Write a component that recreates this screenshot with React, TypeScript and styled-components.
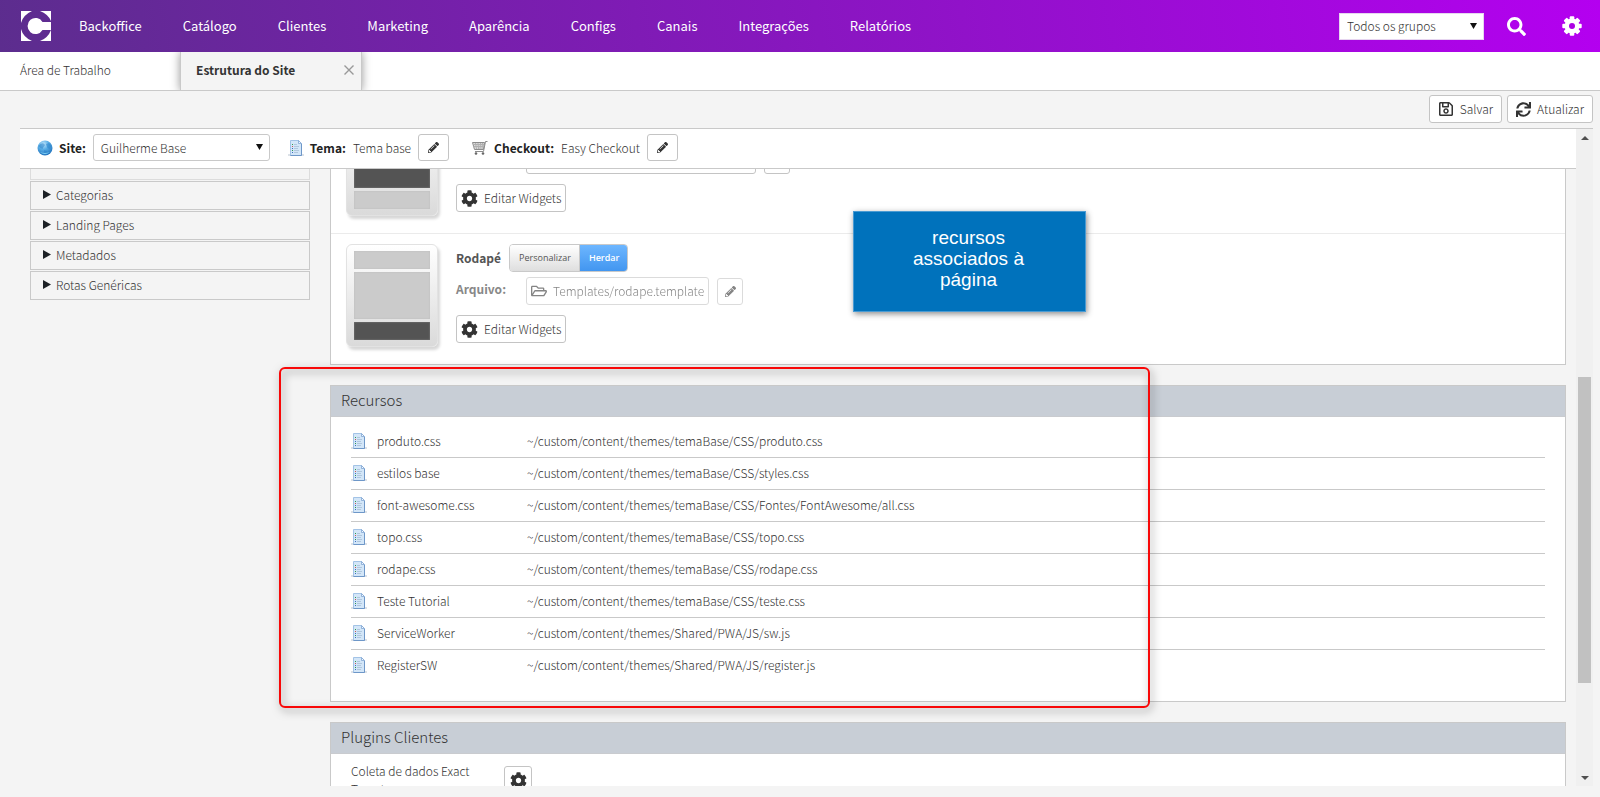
import React from 'react';
import styled, { createGlobalStyle, css } from 'styled-components';
import { FaCog, FaPencilAlt, FaRegFolderOpen, FaRegSave, FaSearch, FaSync } from 'react-icons/fa';

const line = '#c9c9c9';
const page = '#f4f4f4';

const GlobalStyle = createGlobalStyle`
  *, *::before, *::after { box-sizing: border-box; }
  body {
    margin: 0;
    background: ${page};
    color: #333;
    font: 300 12px/18px 'Noto Sans CJK JP', 'Noto Sans CJK SC', 'Noto Sans', sans-serif;
  }
  button, select, input { font: inherit; color: inherit; }
  h2, h3, p { margin: 0; }
`;

const Shell = styled.div`
  display: flex;
  flex-direction: column;
  height: 100vh;
  overflow: hidden;
  padding-bottom: 11px;
`;

/* ---------- top bar ---------- */

const TopBar = styled.header`
  display: flex;
  align-items: center;
  flex: none;
  height: 52px;
  padding: 0 18px 0 21px;
  background: linear-gradient(80deg, #5c2d8e, #b400f0);
`;

const Nav = styled.nav`
  display: flex;
  flex: 1;
  gap: 41px;
  margin-left: 28px;
`;

const NavLink = styled.a`
  color: #fff;
  font-size: 13px;
  font-weight: 400;
  text-decoration: none;
`;

const SelectBox = styled.span<{ $width: number; $height: number; $outlined?: boolean }>`
  position: relative;
  display: flex;
  width: ${(p) => p.$width}px;
  height: ${(p) => p.$height}px;
  border: 1px solid ${(p) => (p.$outlined ? line : '#e6d5f0')};
  border-radius: ${(p) => (p.$outlined ? 3 : 0)}px;
  background: #fff;

  select {
    appearance: none;
    flex: 1;
    border: 0;
    background: none;
    padding: 0 7px;
  }
  svg {
    position: absolute;
    right: 6px;
    top: 8px;
    pointer-events: none;
  }
`;

const BareButton = styled.button<{ $gap: number }>`
  display: flex;
  border: 0;
  background: none;
  padding: 0;
  margin-left: ${(p) => p.$gap}px;
  color: #fff;
`;

/* ---------- tabs ---------- */

const Tabs = styled.div`
  display: flex;
  flex: none;
  height: 39px;
  background: #fff;
  border-bottom: 1px solid ${line};
  overflow: hidden;
`;

const Tab = styled.div<{ $active?: boolean }>`
  display: flex;
  align-items: center;
  justify-content: space-between;
  width: 180px;
  padding: 0 20px 2px;
  ${(p) =>
    p.$active &&
    css`
      width: 182px;
      height: 39px;
      padding: 0 7px 3px 15px;
      background: ${page};
      border: solid ${line};
      border-width: 0 1px;
      box-shadow: 0 0 9px rgba(0, 0, 0, 0.4);
    `}
`;

const TabButton = styled.button<{ $active?: boolean }>`
  border: 0;
  background: none;
  padding: 0;
  font-weight: ${(p) => (p.$active ? 700 : 300)};
`;

/* ---------- actions ---------- */

const Actions = styled.div`
  display: flex;
  flex: none;
  justify-content: flex-end;
  gap: 5px;
  padding: 4px 7px 5px;
`;

const Button = styled.button<{ $pad?: number; $muted?: boolean; $width?: number; $height?: number }>`
  display: flex;
  align-items: center;
  justify-content: center;
  gap: 6px;
  width: ${(p) => (p.$width ? `${p.$width}px` : 'auto')};
  height: ${(p) => p.$height ?? 28}px;
  padding: 0 ${(p) => p.$pad ?? 5}px;
  border: 1px solid #c4c4c4;
  border-radius: 3px;
  background: #fff;
  color: #333;
  white-space: nowrap;
  opacity: ${(p) => (p.$muted ? 0.6 : 1)};

  svg {
    flex: none;
  }
`;

/* ---------- workspace ---------- */

const Workspace = styled.main`
  display: flex;
  flex: 1;
  min-height: 0;
  margin: 0 7px 0 20px;
  border-top: 1px solid ${line};
`;

const View = styled.div`
  display: flex;
  flex-direction: column;
  flex: 1;
  min-width: 0;
`;

const SiteBar = styled.div`
  display: flex;
  align-items: center;
  flex: none;
  height: 40px;
  padding: 0 0 2px 17px;
  background: #fff;
  border-bottom: 1px solid ${line};
`;

const Field = styled.div<{ $gap?: number }>`
  display: flex;
  align-items: center;
  gap: 7px;
  margin-left: ${(p) => p.$gap ?? 0}px;

  > svg {
    margin-right: -1px;
  }
`;

const Strong = styled.label`
  color: #222;
  font-weight: 700;
`;

const Clip = styled.div`
  flex: 1;
  min-height: 0;
  overflow: hidden;
`;

const Content = styled.div`
  position: relative;
  display: flex;
  align-items: flex-start;
  gap: 20px;
  margin-top: -67px;
  padding: 0 10px;
`;

const Side = styled.aside`
  flex: none;
  width: 280px;
  margin-top: 49px;
`;

const SideItem = styled.button<{ $faded?: boolean }>`
  display: flex;
  align-items: center;
  gap: 5px;
  width: 100%;
  height: 29px;
  margin-bottom: 1px;
  padding: 0 12px 2px;
  border: 1px solid ${(p) => (p.$faded ? '#dcdcdc' : line)};
  background: ${page};
`;

const Panels = styled.div`
  display: flex;
  flex: 1;
  flex-direction: column;
  gap: 20px;
  min-width: 0;
`;

const Panel = styled.section`
  background: #fff;
  border: 1px solid ${line};
`;

const PanelTitle = styled.h2`
  height: 31px;
  padding: 0 10px;
  background: #c8ced6;
  border-bottom: 1px solid #c9cbcf;
  font-size: 15px;
  font-weight: 300;
  line-height: 28px;
`;

const Block = styled.div`
  display: flex;
  gap: 18px;
  height: 130px;
  padding: 10px 15px;
  & + & {
    height: 131px;
    border-top: 1px solid #ebebeb;
  }
`;

const Thumb = styled.div`
  display: flex;
  flex: none;
  flex-direction: column;
  gap: 3px;
  width: 92px;
  height: 103px;
  padding: 6px 7px;
  border: 1px solid #e2e2e2;
  border-radius: 6px;
  background: linear-gradient(#fff, #dadada);
  box-shadow: 2px 3px 3px rgba(0, 0, 0, 0.16);
`;

const Zone = styled.div<{ $tall?: boolean; $on?: boolean }>`
  flex: none;
  height: ${(p) => (p.$tall ? 47 : 18)}px;
  background: ${(p) => (p.$on ? '#545454' : '#cbcbcb')};
  box-shadow: inset 0 0 2px ${(p) => (p.$on ? '#888' : '#bbb')};
`;

const BlockBody = styled.div`
  display: flex;
  flex-direction: column;
  align-items: flex-start;
`;

const BlockRow = styled.div<{ $file?: boolean }>`
  display: flex;
  align-items: center;
  gap: 8px;
  min-height: 28px;
  margin-bottom: ${(p) => (p.$file ? 10 : 5)}px;
`;

const BlockName = styled.h3`
  font-size: 12px;
  line-height: 28px;
  font-weight: 700;
  color: #555;
`;

const FieldName = styled.span`
  align-self: flex-start;
  width: 62px;
  line-height: 24px;
  font-weight: 700;
  color: #888;
`;

const Switch = styled.div`
  display: flex;
  height: 28px;
  border: 1px solid ${line};
  border-radius: 4px;
  overflow: hidden;
`;

const SwitchOption = styled.button<{ $on?: boolean }>`
  border: 0;
  border-right: ${(p) => (p.$on ? '0' : `1px solid ${line}`)};
  padding: 0 8px 0 9px;
  font: ${(p) => (p.$on ? 600 : 400)} 9px/20px 'Open Sans', sans-serif;
  color: ${(p) => (p.$on ? '#fff' : '#555')};
  background: ${(p) => (p.$on ? 'linear-gradient(#6db6ff, #4296f0)' : 'linear-gradient(#fff, #dedede)')};
`;

const Table = styled.table`
  width: calc(100% - 40px);
  margin: 8px 20px 20px;
  border-collapse: collapse;

  td {
    height: 32px;
    padding: 0;
  }
  td:first-child {
    width: 26px;
  }
  td:nth-child(2) {
    width: 150px;
  }
  tr + tr td {
    border-top: 1px solid ${line};
  }
  svg {
    display: block;
  }
`;

const Plugin = styled.div`
  display: flex;
  align-items: center;
  gap: 20px;
  padding: 8px 20px 20px;
`;

const PluginName = styled.p`
  width: 133px;
`;

/* ---------- scrollbar ---------- */

const Scrollbar = styled.div`
  display: flex;
  flex: none;
  flex-direction: column;
  width: 17px;
  background: #f0f0f0;
`;

const ScrollEnd = styled.div`
  display: flex;
  align-items: center;
  justify-content: center;
  height: 17px;
`;

const Track = styled.div<{ $share: number; $thumb?: boolean }>`
  flex: ${(p) => p.$share} 0 0;
  margin: 0 2px;
  background: ${(p) => (p.$thumb ? '#c1c1c1' : 'none')};
`;

/* ---------- annotations ---------- */

const Note = styled.div`
  position: absolute;
  left: 833px;
  top: 109px;
  width: 233px;
  height: 101px;
  padding: 15px 52px 15px 50px;
  border: 1px solid #4a9bd3;
  background: #0072bc;
  box-shadow: 1px 2px 6px rgba(0, 0, 0, 0.45);
  color: #fff;
  text-align: center;
  font: 400 19px/21px 'Liberation Sans', sans-serif;
`;

const Highlight = styled.div`
  position: absolute;
  left: 259px;
  top: 265px;
  width: 871px;
  height: 341px;
  border: 2px solid #f80808;
  border-radius: 6px;
  filter: drop-shadow(2px 3px 4px rgba(0, 0, 0, 0.5));
  pointer-events: none;
`;

/* ---------- drawings ---------- */

const Logo = () => (
  <svg width="30" height="30" viewBox="0 0 30 30" aria-label="Logo">
    <path fill="#fff" d="M0 0h11Q2 4 0 12zM19 0h11v10Q27 3 19 0zM0 18q2 8 11 12H0zM30 19v11H19q8-3 11-11z" />
    <path fill="#fff" d="M30 11v8h-8.500a8 8 0 1 1 0-8z" />
  </svg>
);

const Gear8 = () => (
  <svg width="20" height="20" viewBox="-10 -10 20 20">
    <g fill="#fff">
      {[0, 45, 90, 135].map((a) => (
        <rect key={a} x="-2.300" y="-9.700" width="4.600" height="19.400" rx="1" transform={`rotate(${a})`} />
      ))}
      <circle r="7.400" />
    </g>
    <circle r="3" fill="#ac00e4" />
  </svg>
);

const Down = () => (
  <svg width="7" height="8" viewBox="0 0 7 8">
    <path d="M0 1h7L3.500 7z" fill="#111" />
  </svg>
);

const Right = () => (
  <svg width="8" height="9" viewBox="0 0 8 9">
    <path d="M0 0l8 4.500L0 9z" fill="#1d2126" />
  </svg>
);

const Close = () => (
  <svg width="10" height="10" viewBox="0 0 10 10">
    <path d="M.5.5l9 9M9.500.5l-9 9" stroke="#999" strokeWidth="1.400" />
  </svg>
);

const Globe = () => (
  <svg width="16" height="16" viewBox="0 0 16 16">
    <defs>
      <radialGradient id="globe" cx="40%" cy="25%" r="75%">
        <stop offset="0" stopColor="#c5e8fc" />
        <stop offset=".45" stopColor="#5aaee6" />
        <stop offset="1" stopColor="#2274be" />
      </radialGradient>
    </defs>
    <circle cx="8" cy="8" r="7.500" fill="url(#globe)" />
    <path d="M1.500 6q3-4 6-2 1 2-1 3l-1 2-2-1zM9 4l3-1 2.500 3-2 3-2-1zM7 10l3 1-1 3H7z" fill="#2f86cb" opacity=".6" />
    <path d="M3 12q5 4 10 0-5 2-10 0z" fill="#7fd0f5" />
  </svg>
);

const Sheet = () => (
  <svg width="16" height="16" viewBox="0 0 16 16">
    <path d="M0 14.500h16v1H0z" fill="#b9c3cf" />
    <path d="M2.500.5h8L13.500 3.500v12h-11z" fill="#d3e6f8" stroke="#a3c3e6" />
    <path d="M10.500.5v3h3z" fill="#f3f9ff" stroke="#7fa5d2" strokeWidth=".8" />
    <path d="M2.500 15.500h11V4" fill="none" stroke="#6e97c8" />
    <path d="M6 4.500h3M6 6.500h5M6 8.500h4M6 10.500h5M6 12.500h4" stroke="#b0c7de" />
    <path d="M4 4.500h1M4 10.500h1" stroke="#2d9c4c" />
    <path d="M4 6.500h1" stroke="#c55" />
    <path d="M4 8.500h1M4 12.500h1" stroke="#3c70c0" />
  </svg>
);

const Cart = () => (
  <svg width="16" height="14" viewBox="0 0 16 14">
    <path d="M.5 1.500h12l-1 7h-9z" fill="#dcdcdc" />
    <g fill="none" stroke="#8c8c8c">
      <path d="M.5 1.500h12l-1 7h-9zM15.500.5h-2l-2 10H3" />
      <path d="M1 3.500h11M1.500 5.500h10M3.500 2l1 6M6 2l.5 6M8.500 2L8 8M10.500 2L10 8" stroke="#b0b0b0" />
    </g>
    <circle cx="4" cy="12.500" r="1.300" fill="#666" />
    <circle cx="11" cy="12.500" r="1.300" fill="#666" />
  </svg>
);

const ScrollArrow = ({ up }: { up?: boolean }) => (
  <svg width="8" height="4" viewBox="0 0 8 4">
    <path d={up ? 'M0 4l4-4 4 4z' : 'M0 0h8L4 4z'} fill="#505050" />
  </svg>
);

/* ---------- page ---------- */

const menu = ['Backoffice', 'Catálogo', 'Clientes', 'Marketing', 'Aparência', 'Configs', 'Canais', 'Integrações', 'Relatórios'];
const sections = ['Categorias', 'Landing Pages', 'Metadados', 'Rotas Genéricas'];
const base = '~/custom/content/themes/';
const resources = [
  ['produto.css', 'temaBase/CSS/produto.css'],
  ['estilos base', 'temaBase/CSS/styles.css'],
  ['font-awesome.css', 'temaBase/CSS/Fontes/FontAwesome/all.css'],
  ['topo.css', 'temaBase/CSS/topo.css'],
  ['rodape.css', 'temaBase/CSS/rodape.css'],
  ['Teste Tutorial', 'temaBase/CSS/teste.css'],
  ['ServiceWorker', 'Shared/PWA/JS/sw.js'],
  ['RegisterSW', 'Shared/PWA/JS/register.js'],
];

interface TemplateProps {
  name?: string;
  file?: string;
  active: number;
  fileWidth?: number;
}

const TemplateBlock = ({ name, file, active, fileWidth }: TemplateProps) => (
  <Block>
    <Thumb>
      {[0, 1, 2].map((i) => (
        <Zone key={i} $tall={i === 1} $on={i === active} />
      ))}
    </Thumb>
    <BlockBody>
      <BlockRow>
        {name && (
          <>
            <BlockName>{name}</BlockName>
            <Switch>
              <SwitchOption type="button">Personalizar</SwitchOption>
              <SwitchOption type="button" $on>Herdar</SwitchOption>
            </Switch>
          </>
        )}
      </BlockRow>
      <BlockRow $file>
        <FieldName>{file && 'Arquivo:'}</FieldName>
        <Button type="button" $muted={!!file} $pad={4} $width={fileWidth} aria-label="Arquivo">
          {file && <FaRegFolderOpen size={16} />}
          {file}
        </Button>
        <Button type="button" $muted={!!file} $pad={0} $width={26} $height={27} aria-label="Editar arquivo">
          {file && <FaPencilAlt size={11} />}
        </Button>
      </BlockRow>
      <Button type="button" $pad={4}>
        <FaCog size={17} />
        Editar Widgets
      </Button>
    </BlockBody>
  </Block>
);

export default function App() {
  return (
    <>
      <GlobalStyle />
      <Shell>
        <TopBar>
          <Logo />
          <Nav>
            {menu.map((m) => (
              <NavLink key={m} href="#">{m}</NavLink>
            ))}
          </Nav>
          <SelectBox $width={145} $height={27}>
            <select aria-label="Grupo">
              <option>Todos os grupos</option>
            </select>
            <Down />
          </SelectBox>
          <BareButton type="button" $gap={23} aria-label="Buscar">
            <FaSearch size={19} />
          </BareButton>
          <BareButton type="button" $gap={36} aria-label="Ajustes">
            <Gear8 />
          </BareButton>
        </TopBar>

        <Tabs>
          <Tab>
            <TabButton type="button">Área de Trabalho</TabButton>
          </Tab>
          <Tab $active>
            <TabButton type="button" $active>Estrutura do Site</TabButton>
            <BareButton type="button" $gap={0} aria-label="Fechar">
              <Close />
            </BareButton>
          </Tab>
        </Tabs>

        <Actions>
          <Button type="button" $pad={8}>
            <FaRegSave size={16} />
            Salvar
          </Button>
          <Button type="button" $pad={8}>
            <FaSync size={15} />
            Atualizar
          </Button>
        </Actions>

        <Workspace>
          <View>
            <SiteBar>
              <Field>
                <Globe />
                <Strong htmlFor="site">Site:</Strong>
                <SelectBox $width={177} $height={27} $outlined>
                  <select id="site">
                    <option>Guilherme Base</option>
                  </select>
                  <Down />
                </SelectBox>
              </Field>
              <Field $gap={18}>
                <Sheet />
                <Strong htmlFor="theme">Tema:</Strong>
                <span>Tema base</span>
                <Button type="button" id="theme" $width={31} $height={27} aria-label="Editar tema">
                  <FaPencilAlt size={11} />
                </Button>
              </Field>
              <Field $gap={23}>
                <Cart />
                <Strong htmlFor="checkout">Checkout:</Strong>
                <span>Easy Checkout</span>
                <Button type="button" id="checkout" $width={31} $height={27} aria-label="Editar checkout">
                  <FaPencilAlt size={11} />
                </Button>
              </Field>
            </SiteBar>

            <Clip>
              <Content>
                <Side>
                  <SideItem type="button" $faded aria-label="Busca" />
                  {sections.map((s) => (
                    <SideItem type="button" key={s}>
                      <Right />
                      {s}
                    </SideItem>
                  ))}
                </Side>

                <Panels>
                  <Panel>
                    <TemplateBlock active={1} fileWidth={230} />
                    <TemplateBlock name="Rodapé" file="Templates/rodape.template" active={2} />
                  </Panel>

                  <Panel>
                    <PanelTitle>Recursos</PanelTitle>
                    <Table>
                      <tbody>
                        {resources.map(([name, path]) => (
                          <tr key={name}>
                            <td><Sheet /></td>
                            <td>{name}</td>
                            <td>{base}{path}</td>
                          </tr>
                        ))}
                      </tbody>
                    </Table>
                  </Panel>

                  <Panel>
                    <PanelTitle>Plugins Clientes</PanelTitle>
                    <Plugin>
                      <PluginName>Coleta de dados Exact Target</PluginName>
                      <Button type="button" $width={28} aria-label="Configurar plugin">
                        <FaCog size={17} />
                      </Button>
                    </Plugin>
                  </Panel>
                </Panels>

                <Note>recursos associados à página</Note>
                <Highlight />
              </Content>
            </Clip>
          </View>

          <Scrollbar>
            <ScrollEnd><ScrollArrow up /></ScrollEnd>
            <Track $share={231} />
            <Track $share={306} $thumb />
            <Track $share={86} />
            <ScrollEnd><ScrollArrow /></ScrollEnd>
          </Scrollbar>
        </Workspace>
      </Shell>
    </>
  );
}
